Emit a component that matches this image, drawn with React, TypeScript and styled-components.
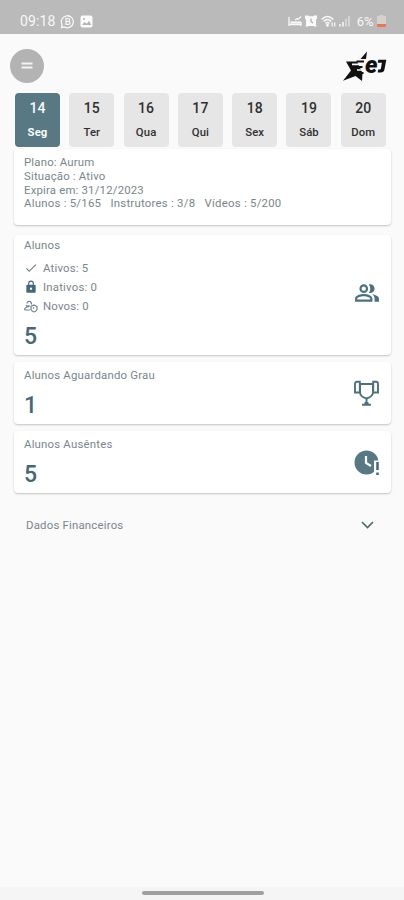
import React from "react";
import styled, { createGlobalStyle } from "styled-components";

const Global = createGlobalStyle`
  * { box-sizing: border-box; }
  body { margin: 0; background: #fafafa; font-family: Roboto, "Liberation Sans", sans-serif; }
`;

const Screen = styled.div`
  width: 404px;
  height: 900px;
  display: flex;
  flex-direction: column;
  background: #fafafa;
  color: #78868c;
  overflow: hidden;
`;

const StatusBar = styled.div`
  height: 34px;
  flex: none;
  background: #bababa;
  color: #f8f8f8;
  display: flex;
  justify-content: space-between;
  padding: 8px 18px 0 20px;
`;

const StatusGroup = styled.div<{ $gap: number }>`
  display: flex;
  align-items: center;
  height: 26px;
  gap: ${(p) => p.$gap}px;
`;

const Clock = styled.span`
  font-size: 14px;
  letter-spacing: 0.1px;
`;

const Battery = styled.span`
  font-size: 13px;
  margin-left: 3px;
`;

const Header = styled.header`
  height: 59px;
  flex: none;
  display: flex;
  justify-content: space-between;
  align-items: flex-start;
  padding: 15px 17px 0 10px;
`;

const MenuButton = styled.button`
  width: 34px;
  height: 34px;
  border: 0;
  border-radius: 50%;
  background: #b3b3b3;
  padding: 0;
  display: flex;
  align-items: center;
  justify-content: center;
`;

const Days = styled.div`
  display: flex;
  gap: 9.3px;
  padding-left: 15px;
  height: 54px;
  flex: none;
`;

const Day = styled.div<{ $active: boolean }>`
  width: 45px;
  height: 54px;
  border-radius: 4px;
  background: ${(p) => (p.$active ? "#587884" : "#e6e6e6")};
  color: ${(p) => (p.$active ? "#f7fafb" : "#303030")};
  display: flex;
  flex-direction: column;
  align-items: center;
  padding-top: 7px;
`;

const DayNumber = styled.span`
  font-size: 14px;
  line-height: 16px;
  font-weight: 500;
  letter-spacing: 0.1px;
`;

const DayName = styled.span<{ $active: boolean }>`
  margin-top: 10px;
  font-size: 11.3px;
  line-height: 14px;
  font-weight: ${(p) => (p.$active ? 700 : 500)};
  letter-spacing: 0.1px;
`;

const Card = styled.section<{ $height: number; $gap: number; $top: number }>`
  margin: ${(p) => p.$gap}px 13px 0 14px;
  height: ${(p) => p.$height}px;
  flex: none;
  background: #fff;
  border-radius: 4px;
  box-shadow: 0 1px 2px rgba(0, 0, 0, 0.22);
  padding: ${(p) => p.$top}px 11px 0 10px;
  display: flex;
  justify-content: space-between;
`;

const CardBody = styled.div`
  display: flex;
  flex-direction: column;
`;

const Label = styled.div`
  font-size: 11.4px;
  line-height: 14px;
  letter-spacing: 0.2px;
  white-space: pre;
`;

const PlanLine = styled(Label)<{ $wide?: boolean }>`
  line-height: 13.8px;
  letter-spacing: ${(p) => (p.$wide ? 0.24 : 0.18)}px;
`;

const StatList = styled.div`
  margin-top: 7px;
  display: flex;
  flex-direction: column;
`;

const Stat = styled.div`
  height: 18.7px;
  display: flex;
  align-items: center;
  gap: 5px;
`;

const Figure = styled.div<{ $gap: number }>`
  margin-top: ${(p) => p.$gap}px;
  font-size: 23px;
  line-height: 28px;
  font-weight: 500;
  color: #44687a;
`;

const CardIcon = styled.div<{ $top: number }>`
  width: 26px;
  height: 28px;
  margin-top: ${(p) => p.$top}px;
  svg { display: block; }
`;

const Expander = styled.div`
  margin: 18px 30px 0 26px;
  height: 28px;
  display: flex;
  align-items: center;
  justify-content: space-between;
`;

const Footer = styled.footer`
  margin-top: auto;
  height: 13px;
  background: #f5f5f5;
  display: flex;
  justify-content: center;
  padding: 4px 0 0 1px;
`;

const HomeHandle = styled.div`
  width: 122px;
  height: 4px;
  border-radius: 2px;
  background: #a0a0a0;
`;

const ChatIcon = () => (
  <svg width="15" height="15" viewBox="0 0 15 15" fill="none" stroke="#f8f8f8">
    <path d="M1.500 13.500l.5-3A6 6 0 1 1 4.400 13z" strokeWidth="1.300" />
    <path d="M6 4.500h2.200a1.400 1.400 0 0 1 0 2.900H6zM6 7.400h2.500a1.500 1.500 0 0 1 0 3H6z" strokeWidth="1.200" />
  </svg>
);

const PhotoIcon = () => (
  <svg width="13" height="13" viewBox="0 0 13 13">
    <rect x="0.5" y="0.5" width="12" height="12" rx="2" fill="#fafafa" />
    <path d="M2 10l2.700-3 2 1.800L9 6l2.300 4z" fill="#b3b3b3" />
    <circle cx="4" cy="4" r="1" fill="#b3b3b3" />
  </svg>
);

const BedIcon = () => (
  <svg width="14" height="12" viewBox="0 0 14 12" stroke="#f8f8f8" fill="none">
    <path d="M1 2v9M1 9.500h12M13 11V7" strokeWidth="1.300" />
    <path d="M2.500 7.500H13" strokeWidth="2.200" />
    <path d="M7 5l2-1.500 1 1L13 1.500" strokeWidth="1.200" />
  </svg>
);

const AlarmIcon = () => (
  <svg width="12" height="12" viewBox="0 0 12 12">
    <path d="M0 .5h3l1 .7h4l1-.7h3v3l-1 1.300v5l.6 1.700H9.300L8.500 11h-5l-.8.500H.4L1 9.800v-5L0 3.500z" fill="#fafafa" />
    <path d="M6 3.500v3l2 1.500" stroke="#aaa" strokeWidth="1.200" fill="none" />
  </svg>
);

const WifiIcon = () => (
  <svg width="15" height="13" viewBox="0 0 15 13" stroke="#f8f8f8" fill="none" strokeWidth="1.500">
    <path d="M.7 4.500Q6.500-1.500 12.300 4.500M2.700 6.500q3.800-4 7.600 0M4.600 8.500q1.900-2 3.800 0" />
    <circle cx="6.500" cy="10.200" r="0.700" fill="#f8f8f8" />
    <path d="M11.200 7.500v4M13.700 7.500v4" strokeWidth="1.200" />
  </svg>
);

const SignalIcon = () => (
  <svg width="11" height="12" viewBox="0 0 11 12" strokeWidth="1.800">
    <path d="M1 11.500V9M4 11.500V7" stroke="#f0f0f0" />
    <path d="M7 11.500V4M10 11.500V1" stroke="#d8d8d8" />
  </svg>
);

const BatteryIcon = () => (
  <svg width="9" height="12" viewBox="0 0 9 12">
    <path d="M2.500 0h4v1H8q1 0 1 1v9q0 1-1 1H1q-1 0-1-1V2q0-1 1-1h1.500z" fill="#d6d0ce" />
    <path d="M0 9h9v2q0 1-1 1H1q-1 0-1-1z" fill="#ed7550" />
  </svg>
);

const Logo = () => (
  <svg width="44" height="34" viewBox="0 0 44 34">
    <path d="M24 2.500L23 10 17.500 10z" fill="#111" />
    <path d="M3 12.500H14L19.500 24 19 32 12.500 27 0 31.800 8 21.500z" fill="#111" />
    <path d="M13.500 12.500H21M14 18h5.500M11 24h9.500" fill="none" stroke="#111" strokeWidth="1.900" />
    <path d="M9 15.300h12.500M14 21h7" fill="none" stroke="#fafafa" strokeWidth="1.700" />
    <text x="22" y="23.500" fontFamily="Roboto, sans-serif" fontSize="23" fontWeight="900" fill="#111" textLength="12.500" lengthAdjust="spacingAndGlyphs" fontStyle="italic" stroke="#fafafa" strokeWidth="1" paintOrder="stroke">e</text>
    <path d="M35.300 10.800h8l-1.800 9.500q-.6 3.200-3.800 3.200h-3l.5-2.900h1.500q1 0 1.200-1l1-5.800h-4.200z" fill="#111" />
  </svg>
);

const CheckIcon = () => (
  <svg width="14" height="14" viewBox="0 0 24 24" fill="#71828a">
    <path d="M9 16.200L4.800 12l-1.400 1.400L9 19 21 7l-1.400-1.400z" />
  </svg>
);

const LockIcon = () => (
  <svg width="14" height="14" viewBox="0 0 24 24" fill="#44687a">
    <path d="M18 8h-1V6A5 5 0 0 0 7 6v2H6a2 2 0 0 0-2 2v10a2 2 0 0 0 2 2h12a2 2 0 0 0 2-2V10a2 2 0 0 0-2-2zM9 6a3 3 0 0 1 6 0v2H9zm3 11a2 2 0 1 1 0-4 2 2 0 0 1 0 4z" />
  </svg>
);

const NewPersonIcon = () => (
  <svg width="14" height="14" viewBox="0 0 14 14" fill="none" stroke="#71828a" strokeWidth="1.200">
    <path d="M3 4.500a2.200 2.200 0 1 1 4.200 1M.8 11V9.500q1.500-2 4.700-2M.8 11H6M2 6.500q2 1 3.500 0" />
    <path d="M7 7.200l3-1.200 3 1.500v3q-1 2-3 2.500-2-.5-3-2.500zM9 8.500l1 1" />
  </svg>
);

const PeopleIcon = () => (
  <svg width="26" height="26" viewBox="0 0 24 24" fill="#4b7080">
    <path d="M9 12a4 4 0 1 0 0-8 4 4 0 0 0 0 8zm0-6a2 2 0 1 1 0 4 2 2 0 0 1 0-4zM9 13c-2.700 0-8 1.300-8 4v3h16v-3c0-2.700-5.300-4-8-4zm6 5H3v-1c0-.7 3.100-2 6-2s6 1.300 6 2zM15 12a4 4 0 0 0 0-8c-.5 0-.9.100-1.300.200A6 6 0 0 1 15 8a6 6 0 0 1-1.300 3.800c.4.100.8.200 1.300.200zM16.700 13.100C18 14 19 15.300 19 17v3h4v-3c0-2.200-3.500-3.500-6.300-3.900z" />
  </svg>
);

const TrophyIcon = () => (
  <svg width="26" height="26" viewBox="0 0 26 26" fill="none" stroke="#4b7080" strokeWidth="1.900">
    <path d="M6 4h13v8.500q-.5 4.500-6.500 6-6-1.500-6.500-6z" />
    <path d="M5.800 1.800H3Q1 1.800 1 4v8.500h4.800zM19.200 1.800H22q2 0 2 2.200v8.500h-4.800z" />
    <path d="M12.500 18.500v5.500M8 24.700h9M10.500 23h4" />
  </svg>
);

const LateIcon = () => (
  <svg width="27" height="26" viewBox="0 0 27 26">
    <circle cx="12.500" cy="12.500" r="12" fill="#587884" />
    <path d="M12 6v7l5 3" fill="none" stroke="#fff" strokeWidth="2.200" />
    <path d="M20 10.500h7V26h-7z" fill="#fff" />
    <path d="M23.500 12v8M23.500 22.500v2.500" stroke="#44687a" strokeWidth="2.500" />
  </svg>
);

const week = [
  ["14", "Seg"], ["15", "Ter"], ["16", "Qua"], ["17", "Qui"],
  ["18", "Sex"], ["19", "Sáb"], ["20", "Dom"],
];

export default function App() {
  return (
    <Screen>
      <Global />
      <StatusBar>
        <StatusGroup $gap={5}>
          <Clock>09:18</Clock>
          <ChatIcon />
          <PhotoIcon />
        </StatusGroup>
        <StatusGroup $gap={3.5}>
          <BedIcon />
          <AlarmIcon />
          <WifiIcon />
          <SignalIcon />
          <Battery>6%</Battery>
          <BatteryIcon />
        </StatusGroup>
      </StatusBar>
      <Header>
        <MenuButton aria-label="Menu">
          <svg width="12" height="8" viewBox="0 0 12 8">
            <path d="M0.500 1.500h11M0.500 5.500h11" stroke="#f3f3f3" strokeWidth="2.200" />
          </svg>
        </MenuButton>
        <Logo />
      </Header>
      <Days>
        {week.map(([number, name], i) => (
          <Day key={number} $active={i === 0}>
            <DayNumber>{number}</DayNumber>
            <DayName $active={i === 0}>{name}</DayName>
          </Day>
        ))}
      </Days>
      <Card $height={76} $gap={2} $top={7}>
        <CardBody>
          <PlanLine>Plano: Aurum</PlanLine>
          <PlanLine>Situação : Ativo</PlanLine>
          <PlanLine>Expira em: 31/12/2023</PlanLine>
          <PlanLine $wide>Alunos : 5/165   Instrutores : 3/8   Vídeos : 5/200</PlanLine>
        </CardBody>
      </Card>
      <Card $height={120} $gap={10} $top={3}>
        <CardBody>
          <Label>Alunos</Label>
          <StatList>
            <Stat><CheckIcon /><Label>Ativos: 5</Label></Stat>
            <Stat><LockIcon /><Label>Inativos: 0</Label></Stat>
            <Stat><NewPersonIcon /><Label>Novos: 0</Label></Stat>
          </StatList>
          <Figure $gap={8}>5</Figure>
        </CardBody>
        <CardIcon $top={42}><PeopleIcon /></CardIcon>
      </Card>
      <Card $height={62} $gap={7} $top={6}>
        <CardBody>
          <Label>Alunos Aguardando Grau</Label>
          <Figure $gap={10}>1</Figure>
        </CardBody>
        <CardIcon $top={12}><TrophyIcon /></CardIcon>
      </Card>
      <Card $height={62} $gap={7} $top={6}>
        <CardBody>
          <Label>Alunos Ausêntes</Label>
          <Figure $gap={10}>5</Figure>
        </CardBody>
        <CardIcon $top={13}><LateIcon /></CardIcon>
      </Card>
      <Expander>
        <Label>Dados Financeiros</Label>
        <svg width="13" height="8" viewBox="0 0 13 8" fill="none">
          <path d="M1 1l5.500 5.500L12 1" stroke="#53666e" strokeWidth="1.600" />
        </svg>
      </Expander>
      <Footer><HomeHandle /></Footer>
    </Screen>
  );
}
